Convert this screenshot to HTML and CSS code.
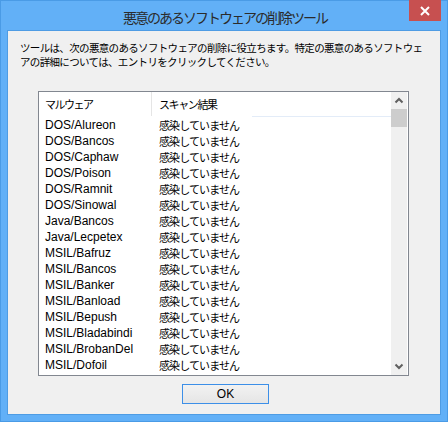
FILE: index.html
```html
<!DOCTYPE html>
<html lang="ja">
<head>
<meta charset="utf-8">
<link rel="stylesheet" href="styles.css">
</head>
<body>
<div class="window">
  <div class="titlebar">
    <div class="title">悪意のあるソフトウェアの削除ツール</div>
    <div class="close"><svg width="10" height="10" viewBox="0 0 10 10"><path d="M1 1L9 9M9 1L1 9" stroke="#fff" stroke-width="2"/></svg></div>
  </div>
  <div class="client">
    <p class="intro">ツールは、次の悪意のあるソフトウェアの削除に役立ちます。特定の悪意のあるソフトウェ<br>アの詳細については、エントリをクリックしてください。</p>
    <div class="list">
      <div class="list-view">
        <div class="header">
          <div class="hcol c1 ja">マルウェア</div>
          <div class="hcol c2 ja">スキャン結果</div>
          <div class="hfill"></div>
        </div>
        <div class="rows">
          <div class="row"><span class="c1">DOS/Alureon</span><span class="c2 ja">感染していません</span></div>
          <div class="row"><span class="c1">DOS/Bancos</span><span class="c2 ja">感染していません</span></div>
          <div class="row"><span class="c1">DOS/Caphaw</span><span class="c2 ja">感染していません</span></div>
          <div class="row"><span class="c1">DOS/Poison</span><span class="c2 ja">感染していません</span></div>
          <div class="row"><span class="c1">DOS/Ramnit</span><span class="c2 ja">感染していません</span></div>
          <div class="row"><span class="c1">DOS/Sinowal</span><span class="c2 ja">感染していません</span></div>
          <div class="row"><span class="c1">Java/Bancos</span><span class="c2 ja">感染していません</span></div>
          <div class="row"><span class="c1">Java/Lecpetex</span><span class="c2 ja">感染していません</span></div>
          <div class="row"><span class="c1">MSIL/Bafruz</span><span class="c2 ja">感染していません</span></div>
          <div class="row"><span class="c1">MSIL/Bancos</span><span class="c2 ja">感染していません</span></div>
          <div class="row"><span class="c1">MSIL/Banker</span><span class="c2 ja">感染していません</span></div>
          <div class="row"><span class="c1">MSIL/Banload</span><span class="c2 ja">感染していません</span></div>
          <div class="row"><span class="c1">MSIL/Bepush</span><span class="c2 ja">感染していません</span></div>
          <div class="row"><span class="c1">MSIL/Bladabindi</span><span class="c2 ja">感染していません</span></div>
          <div class="row"><span class="c1">MSIL/BrobanDel</span><span class="c2 ja">感染していません</span></div>
          <div class="row"><span class="c1">MSIL/Dofoil</span><span class="c2 ja">感染していません</span></div>
        </div>
      </div>
      <div class="scrollbar">
        <div class="arrow"><svg width="16" height="17" viewBox="0 0 16 17"><path d="M4.5 10.5L8 7L11.5 10.5" fill="none" stroke="#606060" stroke-width="2"/></svg></div>
        <div class="thumb"></div>
        <div class="track"></div>
        <div class="arrow"><svg width="16" height="17" viewBox="0 0 16 17"><path d="M4.5 6.5L8 10L11.5 6.5" fill="none" stroke="#606060" stroke-width="2"/></svg></div>
      </div>
    </div>
    <div class="buttons">
      <button class="btn">OK</button>
    </div>
  </div>
</div>
</body>
</html>
```

FILE: styles.css
```css
html, body {
  margin: 0;
  padding: 0;
}
body {
  width: 448px;
  height: 422px;
  overflow: hidden;
  font-family: "Liberation Sans", "Noto Sans CJK JP", sans-serif;
  font-size: 12px;
  color: #000;
}
.window {
  position: relative;
  box-sizing: border-box;
  width: 448px;
  height: 422px;
  background: #62b0f7;
  border: 1px solid #4a9be6;
  padding: 0 6px 6px 6px;
  display: flex;
  flex-direction: column;
}
.titlebar {
  height: 29px;
  display: flex;
  align-items: center;
  justify-content: center;
}
.title {
  font-family: "Noto Sans CJK JP", sans-serif;
  font-size: 14px;
  letter-spacing: -2px;
  color: #2b2b2b;
  padding-top: 3px;
  padding-left: 2px;
}
.close {
  position: absolute;
  top: -1px;
  right: 6px;
  width: 32px;
  height: 21px;
  background: #c75050;
  display: flex;
  align-items: center;
  justify-content: center;
}
.close svg {
  display: block;
}
.client {
  flex: 1;
  background: #f0f0f0;
  border: 1px solid #4e9ce4;
  padding: 10px 0 0 12px;
  display: flex;
  flex-direction: column;
}
.intro {
  margin: 0;
  font-family: "Noto Sans CJK JP", sans-serif;
  font-size: 10.5px;
  letter-spacing: -0.66px;
  line-height: 13.5px;
  white-space: nowrap;
}
.ja {
  font-family: "Noto Sans CJK JP", sans-serif;
  font-size: 11px;
  letter-spacing: -0.9px;
}
.list {
  margin: 23px 0 0 18px;
  box-sizing: border-box;
  width: 371px;
  height: 285px;
  border: 1px solid #828790;
  background: #fff;
  display: flex;
}
.list-view {
  width: 352px;
  overflow: hidden;
}
.header {
  height: 24px;
  display: flex;
}
.hcol {
  height: 24px;
  line-height: 24px;
  box-sizing: border-box;
}
.header .c1 {
  width: 113px;
  padding-left: 6px;
  border-right: 1px solid #e5e5e5;
  letter-spacing: -1.5px;
}
.header .c2 {
  width: 100px;
  padding-left: 7px;
  letter-spacing: -1.4px;
}
.hfill {
  flex: 1;
  align-self: flex-end;
  height: 1px;
  margin-bottom: -1px;
  background: #e3ecf8;
}
.rows {
  padding-top: 1px;
}
.row {
  height: 16px;
  line-height: 16px;
  display: flex;
  white-space: nowrap;
}
.row .c1 {
  width: 113px;
  box-sizing: border-box;
  padding-left: 6px;
}
.row .c2 {
  padding-left: 7px;
}
.scrollbar {
  width: 16px;
  margin-right: 1px;
  background: #f0f0f0;
  display: flex;
  flex-direction: column;
}
.arrow {
  height: 17px;
}
.arrow svg {
  display: block;
}
.thumb {
  height: 18px;
  background: #cdcdcd;
}
.track {
  flex: 1;
}
.buttons {
  display: flex;
  justify-content: center;
  padding-top: 8px;
  padding-right: 12px;
}
.btn {
  box-sizing: border-box;
  width: 87px;
  height: 20px;
  margin: 0;
  padding: 0;
  border: 1px solid #3c8fe8;
  background: linear-gradient(#f2f2f2, #e5e5e5);
  font-family: "Liberation Sans", sans-serif;
  font-size: 12px;
  color: #000;
  margin-left: 3px;
}
```
